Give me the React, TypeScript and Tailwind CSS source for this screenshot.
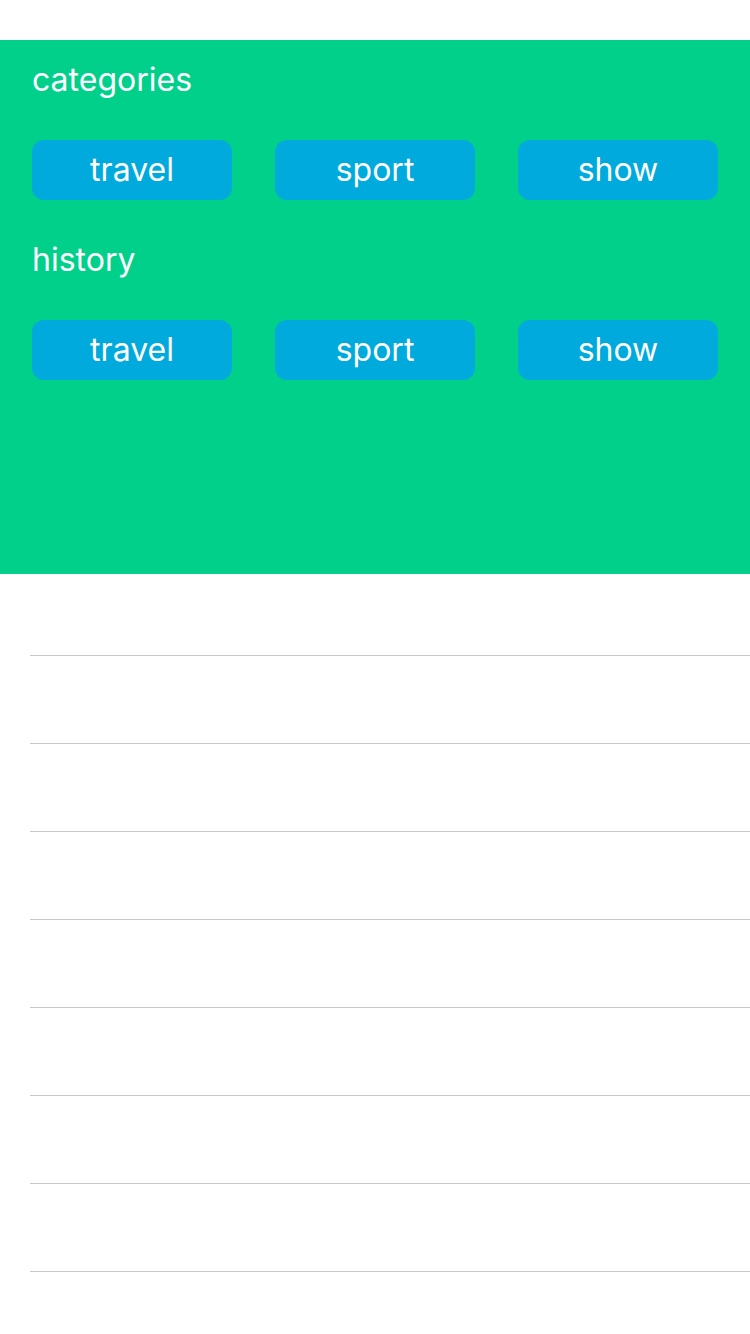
const categories = ["travel", "sport", "show"];

function Section({ title }: { title: string }) {
  return (
    <div>
      <div className="h-[80px] flex items-center px-8 text-[32px] text-white">{title}</div>
      <div className="flex justify-between px-8 my-5">
        {categories.map((c) => (
          <button
            key={c}
            className="w-[200px] h-[60px] rounded-xl bg-[#00aadc] text-white text-[32px] flex items-center justify-center"
          >
            {c}
          </button>
        ))}
      </div>
    </div>
  );
}

export default function App() {
  const rows = Array.from({ length: 8 });
  return (
    <div className="w-[750px] h-[1334px] bg-white overflow-hidden" style={{ fontFamily: "Inter, 'Noto Sans', sans-serif" }}>
      <div className="h-[40px]" />
      {/* Header */}
      <div className="h-[534px] bg-[#00d08a]">
        <Section title="categories" />
        <Section title="history" />
      </div>

      {/* List */}
      <div className="h-[81px]" />
      {rows.map((_, i) => (
        <div key={i}>
          <div className="h-px ml-[30px] bg-[#c8c7cc]" />
          <div className="h-[87px]" />
        </div>
      ))}
    </div>
  );
}
